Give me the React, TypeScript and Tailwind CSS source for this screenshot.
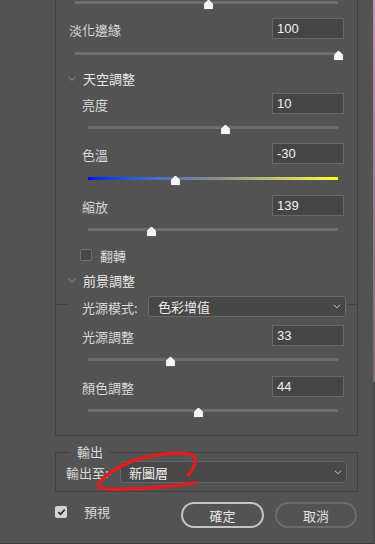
import React from "react";

function Thumb({ x }: { x: number }) {
  return (
    <svg
      className="absolute top-[-2px]"
      style={{ left: x - 5.5 }}
      width="11"
      height="11"
      viewBox="0 0 11 11"
    >
      <path
        d="M5.5 0.4 C5.9 0.4 6.2 0.6 6.6 1 L10.4 4.6 V9.6 Q10.4 10.5 9.5 10.5 H1.5 Q0.6 10.5 0.6 9.6 V4.6 L4.4 1 C4.8 0.6 5.1 0.4 5.5 0.4 Z"
        fill="#f4f4f4"
        stroke="#2e2e2e"
        strokeWidth="0.6"
      />
    </svg>
  );
}

function Track({
  cls,
  thumb,
  gradient,
}: {
  cls: string;
  thumb: number;
  gradient?: boolean;
}) {
  return (
    <div
      className={`relative h-[3px] shrink-0 ${cls} ${
        gradient
          ? "bg-linear-to-r from-[#0000ff] via-[#8a8a8a] to-[#ffff00]"
          : "bg-[#6e6e6e]"
      }`}
    >
      <Thumb x={thumb} />
    </div>
  );
}

function NumInput({ value }: { value: string }) {
  return (
    <div className="w-[72px] h-[21px] bg-[#454545] border border-[#696969] flex items-center pl-[4px] font-['Liberation_Sans',sans-serif] text-[13px] text-[#f2f2f2]">
      {value}
    </div>
  );
}

function InputRow({ label, value, cls }: { label: string; value: string; cls: string }) {
  return (
    <div className={`flex items-center justify-between h-[21px] pr-[13px] shrink-0 ${cls}`}>
      <span className="leading-none mt-[2px]">{label}</span>
      <NumInput value={value} />
    </div>
  );
}

function Chevron() {
  return (
    <svg width="8" height="5" viewBox="0 0 8 5">
      <polyline points="0.5,0.8 4,4.2 7.5,0.8" fill="none" stroke="#9a9a9a" strokeWidth="1" />
    </svg>
  );
}

function SmallChevron() {
  return (
    <svg width="8" height="5" viewBox="0 0 8 5">
      <polyline points="0.8,0.8 4,3.8 7.2,0.8" fill="none" stroke="#c0c0c0" strokeWidth="1" />
    </svg>
  );
}

function Header({ label, cls }: { label: string; cls: string }) {
  return (
    <div className={`flex items-center h-[20px] pl-[12px] gap-[7px] shrink-0 ${cls}`}>
      <Chevron />
      <span className="text-[#e8e8e8] leading-none mt-[1px]">{label}</span>
    </div>
  );
}

export default function App() {
  return (
    <div className="relative w-[375px] h-[544px] bg-[#535353] flex overflow-hidden font-['Noto_Sans_CJK_TC','Noto_Sans_CJK_SC',sans-serif] text-[13px] text-[#d8d8d8]">
      <div className="w-[373px] h-full flex flex-col">
        {/* main panel */}
        <div className="ml-[55px] w-[303px] border-x border-b border-[#404040] flex flex-col pb-[23px] shrink-0">
          <Track cls="mt-[1px] ml-[19px] w-[263px]" thumb={133} />
          <InputRow label="淡化邊緣" value="100" cls="mt-[14px] pl-[13px]" />
          <Track cls="mt-[13px] ml-[19px] w-[263px]" thumb={263} />
          <Header label="天空調整" cls="mt-[13px]" />
          <InputRow label="亮度" value="10" cls="mt-[5px] pl-[26px]" />
          <Track cls="mt-[12px] ml-[32px] w-[250px]" thumb={137} />
          <InputRow label="色溫" value="-30" cls="mt-[14px] pl-[26px]" />
          <Track cls="mt-[13px] ml-[32px] w-[250px]" thumb={87} gradient />
          <InputRow label="縮放" value="139" cls="mt-[15px] pl-[26px]" />
          <Track cls="mt-[12px] ml-[32px] w-[250px]" thumb={63} />
          <div className="mt-[18px] h-[12px] flex items-center pl-[24px] gap-[8px] shrink-0">
            <div className="w-[12px] h-[12px] rounded-[2px] bg-[#474747] border border-[#707070]" />
            <span className="leading-none">翻轉</span>
          </div>
          <Header label="前景調整" cls="mt-[9px]" />
          <div className="relative mt-[6px] h-[21px] shrink-0">
            <div className="absolute left-0 right-0 top-[8px] h-px bg-[#404040]" />
            <div className="relative ml-[12px] mr-[10px] h-full bg-[#535353] flex items-center pl-[14px]">
              <span className="leading-none w-[66px] mt-[1px]">光源模式:</span>
              <div className="w-[198px] h-[21px] rounded-[3px] bg-[#474747] border border-[#6a6a6a] flex items-center justify-between pl-[9px] pr-[4px]">
                <span className="text-[#ececec] leading-none">色彩增值</span>
                <SmallChevron />
              </div>
            </div>
          </div>
          <InputRow label="光源調整" value="33" cls="mt-[8px] pl-[26px]" />
          <Track cls="mt-[12px] ml-[32px] w-[250px]" thumb={82} />
          <InputRow label="顏色調整" value="44" cls="mt-[15px] pl-[26px]" />
          <Track cls="mt-[12px] ml-[32px] w-[250px]" thumb={110} />
        </div>

        {/* output group */}
        <div className="relative mt-[16px] ml-[55px] w-[303px] h-[40px] border border-[#404040] flex items-center pl-[10px] pr-[10px] shrink-0">
          <span className="absolute left-[14px] top-[-10px] px-[7px] bg-[#535353] leading-[18px] text-[#dcdcdc]">
            輸出
          </span>
          <span className="leading-none w-[54px]">輸出至:</span>
          <div className="w-[227px] h-[22px] rounded-[3px] bg-[#484848] border border-[#666666] flex items-center justify-between pl-[8px] pr-[4px]">
            <span className="text-[#f0f0f0] leading-none">新圖層</span>
            <SmallChevron />
          </div>
        </div>

        {/* bottom row */}
        <div className="mt-[10px] flex items-start h-[26px] pl-[55px] shrink-0">
          <div className="mt-[3px] flex items-center gap-[17px] w-[126px]">
            <div className="w-[12px] h-[12px] rounded-[2px] bg-[#d4d4d4] flex items-center justify-center">
              <svg width="9" height="8" viewBox="0 0 9 8">
                <polyline points="1.3,4.2 3.5,6.3 7.8,1.5" fill="none" stroke="#2b2b2b" strokeWidth="1.8" />
              </svg>
            </div>
            <span className="leading-none">預視</span>
          </div>
          <div className="w-[83px] h-[26px] rounded-full border-2 border-[#c4c4c4] flex items-center justify-center text-[#e6e6e6] leading-none">
            確定
          </div>
          <div className="ml-[11px] w-[82px] h-[26px] rounded-full border-2 border-[#6c6c6c] flex items-center justify-center text-[#e0e0e0] leading-none">
            取消
          </div>
        </div>

        <div className="mt-auto h-px bg-[#3c3c3c] shrink-0" />
      </div>

      {/* photo strip at right edge */}
      <div className="w-[2px] h-full flex flex-col">
        <div className="h-[382px] bg-linear-to-b from-[#c993bd] via-[#9a7c95] to-[#7d6c70]" />
        <div className="flex-1 bg-[#4b4848]" />
      </div>

      {/* red scribble annotation */}
      <svg
        className="absolute left-0 top-0 pointer-events-none"
        width="375"
        height="544"
        viewBox="0 0 375 544"
      >
        <path
          d="M188 475 C196 466 199 456 189 454 C166 451 131 458 113 471 C101 479 95 486 100 488 C116 491 160 488 196 483"
          fill="none"
          stroke="#dd1f1f"
          strokeWidth="3.4"
          strokeLinecap="round"
          strokeLinejoin="round"
        />
      </svg>
    </div>
  );
}
